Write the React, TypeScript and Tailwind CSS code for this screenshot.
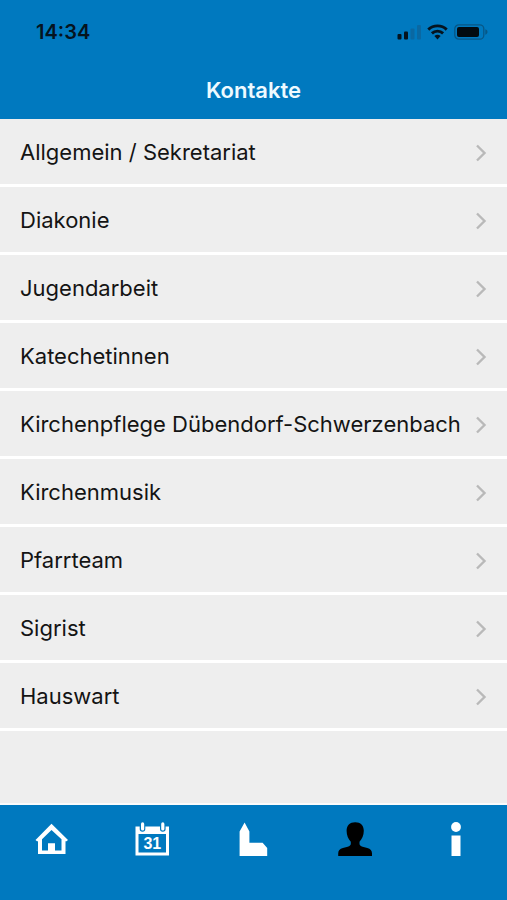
import React from "react";

const contacts = [
  "Allgemein / Sekretariat",
  "Diakonie",
  "Jugendarbeit",
  "Katechetinnen",
  "Kirchenpflege Dübendorf-Schwerzenbach",
  "Kirchenmusik",
  "Pfarrteam",
  "Sigrist",
  "Hauswart",
];

function SignalIcon() {
  return (
    <svg width="24" height="16" viewBox="0 0 24 16" aria-hidden="true">
      <rect x="0.5" y="10" width="4" height="5.5" rx="1" fill="#05141f" />
      <rect x="7" y="7.5" width="4" height="8" rx="1" fill="#05141f" />
      <rect x="13.5" y="4.5" width="4" height="11" rx="1" fill="#0a68a2" />
      <rect x="20" y="1" width="4" height="14.5" rx="1" fill="#0a68a2" />
    </svg>
  );
}

function WifiIcon() {
  return (
    <svg width="21" height="16" viewBox="0 0 21 16" fill="none" stroke="#05141f" strokeWidth="2.9" aria-hidden="true">
      <path d="M1.3 5.6a13.2 13.2 0 0 1 18.4 0" />
      <path d="M4.9 9.4a8 8 0 0 1 11.2 0" />
      <path d="M7.4 12.1a4.5 4.5 0 0 1 6.2 0L10.5 15.4z" fill="#05141f" stroke="none" />
    </svg>
  );
}

function BatteryIcon() {
  return (
    <svg width="34" height="16" viewBox="0 0 34 16" aria-hidden="true">
      <rect x="0.8" y="0.8" width="29" height="14.4" rx="4" fill="none" stroke="#075786" strokeWidth="1.3" />
      <rect x="3" y="3" width="22" height="10" rx="2" fill="#020a10" />
      <path d="M31.3 5.3c1.5.5 2.2 1.5 2.2 2.7s-.7 2.2-2.2 2.7z" fill="#075786" />
    </svg>
  );
}

function ChevronIcon() {
  return (
    <svg className="shrink-0" width="12" height="18" viewBox="0 0 12 18" fill="none" stroke="#b9b9b9" strokeWidth="2.4" aria-hidden="true">
      <path d="M2 1.5 9.5 9 2 16.5" />
    </svg>
  );
}

function HomeIcon() {
  return (
    <svg width="34" height="34" viewBox="0 0 34 34" fill="#fff" aria-hidden="true">
      <path
        fillRule="evenodd"
        d="M17.5 1.8 34 18l-1.5 1.3h-1V32H4V19.3H3L1.5 18zM17.5 8 8 17.3V28.5h6v-7.2h7v7.2h6.5V17.3z"
      />
    </svg>
  );
}

function CalendarIcon() {
  return (
    <svg width="34" height="34" viewBox="0 0 34 34" aria-hidden="true">
      <path fillRule="evenodd" fill="#fff" d="M.5 4.5H34v29H.5zM3.5 12v18.5h27.5V12z" />
      <rect x="4.7" y="0" width="5.6" height="9.8" rx="2.8" fill="#0079bf" />
      <rect x="25" y="0" width="5.6" height="9.8" rx="2.8" fill="#0079bf" />
      <rect x="6" y="0.3" width="3.2" height="8.2" rx="1.6" fill="#fff" />
      <rect x="26.2" y="0.3" width="3.2" height="8.2" rx="1.6" fill="#fff" />
      <text x="17.3" y="27" textAnchor="middle" fill="#fff" className="font-['Liberation_Sans',sans-serif] text-[16px] font-bold">
        31
      </text>
    </svg>
  );
}

function ChurchIcon() {
  return (
    <svg width="34" height="34" viewBox="0 0 34 34" fill="#fff" aria-hidden="true">
      <path d="M8.6.6 13.4 9.5v11.2h13.2l4.6 5.2V34H3.6V9.5z" />
    </svg>
  );
}

function PersonIcon() {
  return (
    <svg width="34" height="34" viewBox="0 0 34 34" fill="#000" aria-hidden="true">
      <path d="M17.2.2c5.5 0 8.6 3.4 8.6 8.5 0 4.6-1.8 8.5-4.3 11v2.1c0 1.7 1.1 2.3 3.1 2.9l4.7 1.3c3.2.9 4.7 2.7 4.7 5.5V34H.2v-2.5c0-2.8 1.5-4.6 4.7-5.5l4.8-1.3c2-.6 3.1-1.2 3.1-2.9v-2.1c-2.5-2.5-4.2-6.4-4.2-11 0-5.1 3.1-8.5 8.6-8.5z" />
    </svg>
  );
}

function InfoIcon() {
  return (
    <svg width="34" height="34" viewBox="0 0 34 34" fill="#fff" aria-hidden="true">
      <circle cx="17" cy="5" r="4.9" />
      <path d="M12.5 13.5h9V34h-9z" />
    </svg>
  );
}

const tabs = [
  { label: "Home", Icon: HomeIcon },
  { label: "Kalender", Icon: CalendarIcon },
  { label: "Kirche", Icon: ChurchIcon },
  { label: "Kontakte", Icon: PersonIcon },
  { label: "Info", Icon: InfoIcon },
];

export default function App() {
  return (
    <div className="flex min-h-screen flex-col bg-[#eeeeee] font-['Inter','Liberation_Sans',sans-serif] text-[#141414]">
      <header className="bg-[#0079bf]">
        <div className="flex h-16 items-center justify-between pr-[19px] pl-9">
          <time className="text-xl font-semibold text-[#05141f]">14:34</time>
          <div className="flex items-center gap-1.5">
            <SignalIcon />
            <WifiIcon />
            <BatteryIcon />
          </div>
        </div>
        <h1 className="pt-3 pb-[15px] text-center text-[22px] leading-7 font-semibold text-[#eefaff]">Kontakte</h1>
      </header>

      <main className="flex-1 border-b-2 border-[#fbfbfb]">
        <ul>
          {contacts.map((name) => (
            <li key={name} className="border-b-3 border-white">
              <button type="button" className="flex w-full items-center justify-between gap-2 pt-[19px] pr-5 pb-[17px] pl-5 text-left text-[22px] leading-[29px]">
                <span>{name}</span>
                <ChevronIcon />
              </button>
            </li>
          ))}
        </ul>
      </main>

      <nav className="grid grid-cols-5 bg-[#0079bf] pt-[17px] pb-11">
        {tabs.map(({ label, Icon }) => (
          <button key={label} type="button" aria-label={label} className="flex justify-center">
            <Icon />
          </button>
        ))}
      </nav>
    </div>
  );
}
